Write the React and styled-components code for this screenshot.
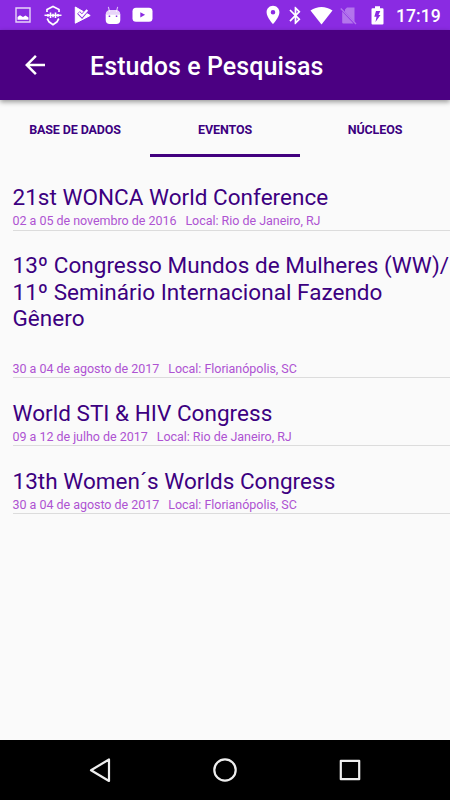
import React from "react";
import styled, { createGlobalStyle } from "styled-components";
import { MdArrowBack, MdLocationOn, MdBluetooth } from "react-icons/md";

const GlobalStyle = createGlobalStyle`
  * {
    box-sizing: border-box;
  }
  body {
    margin: 0;
    background-color: #fafafa;
    font-family: Roboto, "Noto Sans", sans-serif;
  }
`;

const Screen = styled.div`
  display: flex;
  flex-direction: column;
  width: 450px;
  height: 800px;
  overflow: hidden;
  background-color: #fafafa;
`;

const StatusBar = styled.div`
  display: flex;
  justify-content: space-between;
  flex: none;
  height: 30px;
  padding: 0 9px 0 7.5px;
  background-color: #8a2be2;
  color: #fff;
`;

const StatusGroup = styled.div`
  display: flex;
  align-items: center;
`;

const StatusIcon = styled.span`
  display: flex;
  align-items: center;
  justify-content: center;
  width: ${(props) => props.$width || 30}px;
  height: 30px;
  opacity: ${(props) => props.$opacity || 1};
  svg {
    display: block;
    flex: none;
  }
`;

const Clock = styled.span`
  width: 45px;
  margin-left: 3px;
  padding-top: 2px;
  font-size: 17.6px;
  font-weight: 500;
  line-height: 28px;
  white-space: nowrap;
`;

const AppBar = styled.header`
  display: flex;
  align-items: center;
  flex: none;
  height: 70px;
  padding-left: 20px;
  background-color: #4b0082;
  box-shadow: 0 2px 5px rgba(0, 0, 0, 0.4);
  color: #fff;
  z-index: 1;
`;

const BackButton = styled.button`
  display: flex;
  width: 30px;
  height: 30px;
  padding: 0;
  border: none;
  background: none;
  color: #fff;
`;

const Title = styled.h1`
  margin: 3px 0 0 40px;
  font-size: 25px;
  font-weight: 500;
  line-height: 30px;
  letter-spacing: 0.08px;
`;

const Tabs = styled.nav`
  display: flex;
  flex: none;
  height: 57px;
`;

const Tab = styled.button`
  flex: 1;
  padding: 4px 0 0;
  border: none;
  border-bottom: 3px solid ${(props) => (props.$active ? "#42007f" : "transparent")};
  background: none;
  color: #3c0080;
  font-family: inherit;
  font-size: 12.5px;
  font-weight: 700;
  letter-spacing: -0.12px;
  text-transform: uppercase;
`;

const EventList = styled.ul`
  flex: 1;
  margin: 0;
  padding: 5.2px 0 0 12.5px;
  list-style: none;
`;

const EventItem = styled.li`
  padding-top: 21.6px;
  border-bottom: 1px solid #dcdcdc;
  &:first-child {
    padding-bottom: 0.8px;
  }
`;

const EventTitle = styled.h2`
  margin: 0;
  color: #3c0080;
  font-size: 22.5px;
  font-weight: 400;
  line-height: 26.3px;
  letter-spacing: 0.03px;
  white-space: pre-line;
`;

const EventInfo = styled.p`
  display: flex;
  gap: 9px;
  margin: ${(props) => (props.$spaced ? "29px" : "2px")} 0 0;
  color: #ae53d2;
  font-size: 12.5px;
  line-height: 17px;
  letter-spacing: -0.03px;
`;

const NavBar = styled.footer`
  display: flex;
  align-items: center;
  justify-content: center;
  gap: 95px;
  flex: none;
  height: 60px;
  background-color: #000;
  svg {
    display: block;
    fill: none;
    stroke: #eee;
    stroke-width: 2.2;
    stroke-linejoin: round;
  }
`;

const tabs = ["Base de dados", "Eventos", "Núcleos"];

const events = [
  {
    title: "21st WONCA World Conference",
    date: "02 a 05 de novembro de 2016",
    place: "Rio de Janeiro, RJ",
  },
  {
    title: "13º Congresso Mundos de Mulheres (WW)/\n11º Seminário Internacional Fazendo\nGênero",
    date: "30 a 04 de agosto de 2017",
    place: "Florianópolis, SC",
    spaced: true,
  },
  {
    title: "World STI & HIV Congress",
    date: "09 a 12 de julho de 2017",
    place: "Rio de Janeiro, RJ",
  },
  {
    title: "13th Women´s Worlds Congress",
    date: "30 a 04 de agosto de 2017",
    place: "Florianópolis, SC",
  },
];

const PictureIcon = () => (
  <svg width="16" height="16" viewBox="0 0 16 16" fill="#fff">
    <path d="M1 1h14v14H1z" fill="none" stroke="#fff" strokeWidth="1.4" opacity=".8" />
    <path d="M2.500 12.800V10L5 8.300l3 1.700 2.500-1.500 3 2v2.300z" />
  </svg>
);

const ShieldIcon = () => (
  <svg width="18" height="21" viewBox="0 0 18 21" fill="none" stroke="#fff">
    <path d="M3 7V4.500L9 1.400l6 3.100V7M3.200 13.500L5 16.800l4 2.800 4-2.800 1.800-3.300" strokeWidth="1.700" />
    <path d="M.5 10.300h17" strokeWidth="1.500" />
    <path d="M4 9v2.700M6.500 7.500v5.500M9 8.800v3.500M11.500 7.500v5.500M14 9v2.700" strokeWidth="1.600" />
  </svg>
);

const PlayCheckIcon = () => (
  <svg width="17" height="18" viewBox="0 0 17 18">
    <path d="M1.300 1L16.200 9.500 1.300 17.200z" fill="#fff" stroke="#fff" strokeLinejoin="round" />
    <path d="M4.500 6.500L8 10.200 14 3" fill="none" stroke="#8a2be2" strokeWidth="3.800" />
    <path d="M4.800 6.700L8 9.800 13.300 4" fill="none" stroke="#fff" strokeWidth="2.200" />
  </svg>
);

const RobotIcon = () => (
  <svg width="16" height="19" viewBox="0 0 16 19" fill="#fff">
    <path d="M3.300 .8l1.400 5M12.700 .8l-1.400 5" stroke="#fff" strokeWidth="1.100" opacity=".7" />
    <path d="M.7 8.500C.7 5.500 2.500 4 5 4h6c2.500 0 4.300 1.500 4.300 4.500z" opacity=".8" />
    <path d="M.7 8.300h14.600V14c0 2.500-1.500 4-4 4H4.700c-2.500 0-4-1.500-4-4z" />
    <path d="M3.700 9.500h1.500V11H3.700zM10.800 9.500h1.500V11h-1.500z" fill="#8a2be2" />
  </svg>
);

const VideoIcon = () => (
  <svg width="21" height="16" viewBox="0 0 21 16">
    <rect x=".5" y=".8" width="20" height="14" rx="3.500" fill="#fff" />
    <path d="M8.300 5.200v5.200l4.800-2.600z" fill="#8a2be2" />
  </svg>
);

const WifiIcon = () => (
  <svg width="23" height="19" viewBox="0 0 23 19" fill="#fff">
    <path d="M.5 4.500C7-.3 16-.3 22.500 4.500L11.500 18.500z" />
  </svg>
);

const NoSimIcon = () => (
  <svg width="17" height="19" viewBox="0 0 17 19">
    <path d="M7 1.500h7.500V16L5 5.800V3.500zM2.200 5.500L13.500 17.500H3.200a1 1 0 0 1-1-1z" fill="#fff" />
    <path d="M.8 2.500l15.200 15.500" stroke="#fff" strokeWidth="1.300" />
  </svg>
);

const BatteryIcon = () => (
  <svg width="13" height="19" viewBox="0 0 13 19">
    <path d="M4 .3h5V2.300h2.500a1 1 0 0 1 1 1v14.200a1 1 0 0 1-1 1h-10a1 1 0 0 1-1-1V3.300a1 1 0 0 1 1-1H4z" fill="#fff" />
    <path d="M5 5h4.300L7.500 9h2L4.500 16l1-5.200H3.300z" fill="#8a2be2" />
  </svg>
);

const App = () => {
  return (
    <Screen>
      <GlobalStyle />
      <StatusBar>
        <StatusGroup>
          <StatusIcon><PictureIcon /></StatusIcon>
          <StatusIcon><ShieldIcon /></StatusIcon>
          <StatusIcon><PlayCheckIcon /></StatusIcon>
          <StatusIcon><RobotIcon /></StatusIcon>
          <StatusIcon><VideoIcon /></StatusIcon>
        </StatusGroup>
        <StatusGroup>
          <StatusIcon $width={22}><MdLocationOn size={22} /></StatusIcon>
          <StatusIcon $width={23}><MdBluetooth size={21} /></StatusIcon>
          <StatusIcon $width={28}><WifiIcon /></StatusIcon>
          <StatusIcon $width={27} $opacity={0.35}><NoSimIcon /></StatusIcon>
          <StatusIcon $width={31}><BatteryIcon /></StatusIcon>
          <Clock>17:19</Clock>
        </StatusGroup>
      </StatusBar>
      <AppBar>
        <BackButton aria-label="Voltar">
          <MdArrowBack size={30} />
        </BackButton>
        <Title>Estudos e Pesquisas</Title>
      </AppBar>
      <Tabs>
        {tabs.map((tab) => (
          <Tab key={tab} $active={tab === "Eventos"}>
            {tab}
          </Tab>
        ))}
      </Tabs>
      <EventList>
        {events.map((event) => (
          <EventItem key={event.title}>
            <EventTitle>{event.title}</EventTitle>
            <EventInfo $spaced={event.spaced}>
              <span>{event.date}</span>
              <span>Local: {event.place}</span>
            </EventInfo>
          </EventItem>
        ))}
      </EventList>
      <NavBar>
        <svg width="30" height="30" viewBox="0 0 30 30">
          <path d="M24 4.500v21.500L6 15.200z" />
        </svg>
        <svg width="30" height="30" viewBox="0 0 30 30">
          <circle cx="15" cy="15" r="10.700" />
        </svg>
        <svg width="30" height="30" viewBox="0 0 30 30">
          <path d="M5.800 5.800h18.400v18.400H5.800z" />
        </svg>
      </NavBar>
    </Screen>
  );
};

export default App;
